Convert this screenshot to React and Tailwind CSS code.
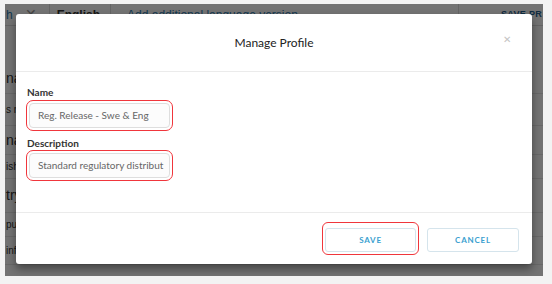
const sideRows = [
  { text: "na", cls: "h-[31px] text-[14px]" },
  { text: "s r", cls: "h-[32px] text-[10px]" },
  { text: "na", cls: "h-[29px] text-[14px]" },
  { text: "ish", cls: "h-[24px] text-[10px]" },
  { text: "try", cls: "h-[34px] text-[14px]" },
  { text: "pu", cls: "h-[24px] text-[10px]" },
  { text: "inf", cls: "h-[28px] text-[10px]" },
]

function BackgroundPage() {
  return (
    <div className="flex h-full w-full flex-col bg-white font-['Liberation_Sans',sans-serif] text-[#333]">
      <div className="flex h-[22px] shrink-0 items-center border-b border-[#ddd] text-[12px]">
        <span className="pl-[1px] text-[#2b7bb0]">h</span>
        <span className="ml-[12px] text-[14px] text-[#999]">✕</span>
        <span className="ml-[12px] h-full border-l border-[#ddd]" />
        <span className="ml-[7px] font-bold">English</span>
        <span className="ml-[10px] h-full border-l border-[#ddd]" />
        <span className="ml-[16px] text-[#2b7bb0]">Add additional language version</span>
        <span className="ml-auto h-full border-l border-[#ddd]" />
        <span className="ml-[42px] pr-[1px] text-[9px] font-bold tracking-[0.3px] text-[#1f5f8f]">SAVE PR</span>
      </div>
      <div className="mt-[37px] flex flex-col">
        {sideRows.map((row, i) => (
          <div key={i} className={`flex items-center border-b border-[#e6e6e6] ${row.cls}`}>
            <span className="pl-[1px]">{row.text}</span>
          </div>
        ))}
      </div>
    </div>
  )
}

function Field({ label, value, gap }) {
  return (
    <div className="flex flex-col">
      <label className="pl-[1px] text-[10px] font-bold leading-[12px] text-[#333]">{label}</label>
      <div className={`${gap} w-[147px] rounded-[7px] border-[1.5px] border-[#f0363c] p-[2px]`}>
        <div className="flex h-[25px] items-center overflow-hidden whitespace-nowrap rounded-[4px] border border-[#dedede] bg-[#fcfcfc] px-[8px] text-[10px] text-[#666]">
          {value}
        </div>
      </div>
    </div>
  )
}

export default function App() {
  return (
    <div className="h-[284px] w-[552px] bg-[#f3f3f3] pl-[5px] pt-[4px]">
      <div className="relative h-[272px] w-[538px] overflow-hidden">
        <BackgroundPage />
        <div className="absolute inset-0 bg-black/55" />
        <div className="absolute left-[11px] top-[10px] flex h-[250px] w-[516px] flex-col rounded-[3px] bg-white font-['Lato',sans-serif] shadow-[0_5px_8px_rgba(0,0,0,0.4)]">
          <div className="relative flex h-[58px] shrink-0 items-center justify-center border-b border-[#ebebeb]">
            <h2 className="text-[12px] text-[#222]">Manage Profile</h2>
            <span className="absolute right-[21px] top-[21px] font-['Liberation_Sans',sans-serif] text-[10px] leading-none text-[#c4c4c4]">✕</span>
          </div>
          <div className="flex flex-1 flex-col gap-[6px] border-b border-[#ebebeb] pl-[10px] pt-[14px]">
            <Field label="Name" value="Reg. Release - Swe & Eng" gap="mt-[2px]" />
            <Field label="Description" value="Standard regulatory distribut" gap="mt-[1px]" />
          </div>
          <div className="flex h-[51px] shrink-0 items-center justify-end gap-[5px] pr-[10px]">
            <div className="rounded-[6px] border-[1.5px] border-[#f0363c] p-[2px]">
              <button className="h-[24px] w-[91px] rounded-[3px] border border-[#d5e4ec] bg-white text-[8px] font-bold tracking-[0.8px] text-[#3a9fd0]">
                SAVE
              </button>
            </div>
            <div className="p-[3px]">
              <button className="h-[24px] w-[92px] rounded-[3px] border border-[#d5e4ec] bg-white text-[8px] font-bold tracking-[0.8px] text-[#3a9fd0]">
                CANCEL
              </button>
            </div>
          </div>
        </div>
      </div>
    </div>
  )
}
